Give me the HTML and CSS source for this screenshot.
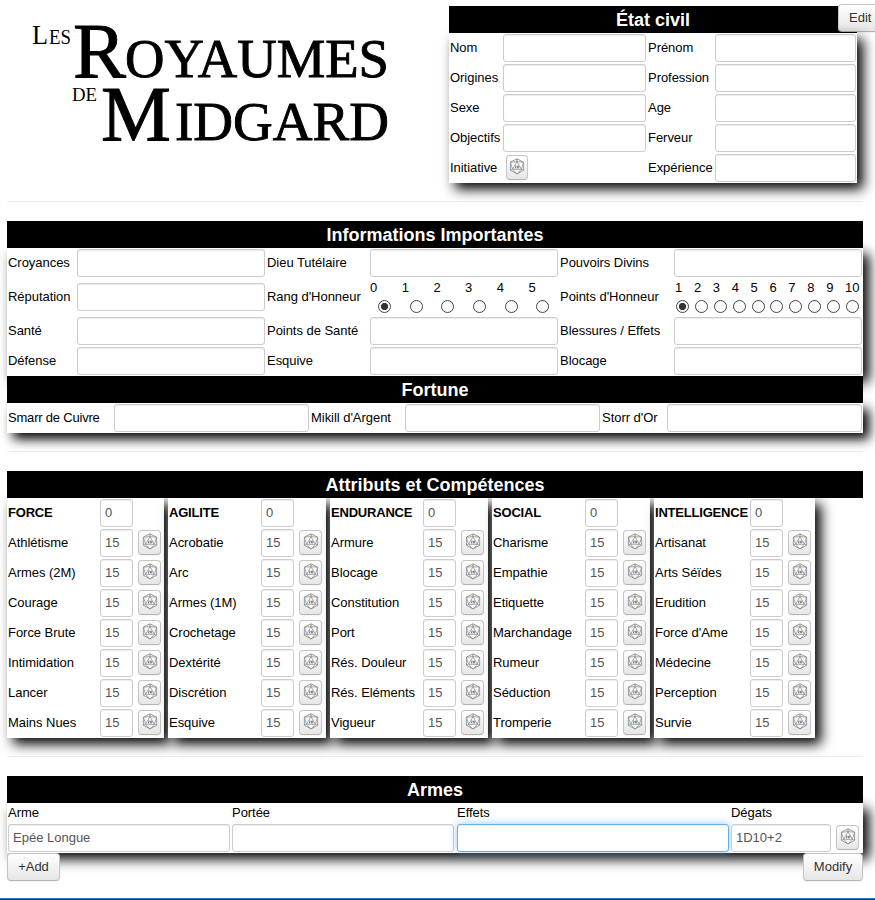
FILE: index.html
```html
<!DOCTYPE html>
<html lang="fr">
<head>
<meta charset="utf-8">
<title>Les Royaumes de Midgard</title>
<link rel="stylesheet" href="styles.css">
</head>
<body>
<svg class="defs" aria-hidden="true">
  <symbol id="d20" viewBox="0 0 16 17">
    <path d="M8 .8 14.6 4.2V12.2L8 16 1.4 12.2V4.2Z" fill="#f8f8f8" stroke="#8e8e8e" stroke-width=".9"/>
    <path d="M8 3.6 12.4 11.3H3.6ZM8 1V3.6M1.4 4.2 8 3.6 14.6 4.2M1.4 4.2 3.6 11.3 1.4 12.2M14.6 4.2 12.4 11.3 14.6 12.2M3.6 11.3 8 16 12.4 11.3" fill="none" stroke="#8c8c8c" stroke-width=".75"/>
    <path d="M6 8H7.4L6.2 10H7.5M8.5 8H9.8V10H8.5Z" fill="none" stroke="#666" stroke-width=".7"/>
    <path d="M8 1.3V3.5" stroke="#c9a05c" stroke-width=".9"/><path d="M1.6 5.5V11" stroke="#8fb5dc" stroke-width=".6"/><path d="M14.4 5.5V11" stroke="#a5b4d8" stroke-width=".6"/>
  </symbol>
</svg>
<main class="sheet">
  <header class="top">
    <svg class="logo" width="400" height="160" viewBox="0 0 400 160">
      <text x="25" y="38" font-size="27" textLength="16" lengthAdjust="spacingAndGlyphs">L</text>
      <text x="42" y="38" font-size="20" textLength="22" lengthAdjust="spacingAndGlyphs">ES</text>
      <g class="heavy">
      <text x="66" y="70.5" font-size="78" textLength="53" lengthAdjust="spacingAndGlyphs">R</text>
      <text x="118" y="70.5" font-size="55" textLength="264" lengthAdjust="spacingAndGlyphs">OYAUMES</text>
      <text x="94" y="134" font-size="78" textLength="70" lengthAdjust="spacingAndGlyphs">M</text>
      <text x="168" y="134" font-size="55" textLength="214" lengthAdjust="spacingAndGlyphs">IDGARD</text>
      </g>
      <text x="65" y="95" font-size="19" textLength="25" lengthAdjust="spacingAndGlyphs">DE</text>
    </svg>
    <section class="civil">
      <h2>État civil</h2>
      <button class="btn edit">Edit</button>
      <div class="panel civil-grid">
        <label>Nom</label><input><label>Prénom</label><input>
        <label>Origines</label><input><label>Profession</label><input>
        <label>Sexe</label><input><label>Age</label><input>
        <label>Objectifs</label><input><label>Ferveur</label><input>
        <label>Initiative</label><button class="roll"><svg><use href="#d20"/></svg></button><label>Expérience</label><input>
      </div>
    </section>
  </header>
  <hr>
  <section class="infos">
    <h2>Informations Importantes</h2>
    <div class="panel info-grid">
      <label>Croyances</label><input><label>Dieu Tutélaire</label><input><label>Pouvoirs Divins</label><input>
      <label>Réputation</label><input><label>Rang d'Honneur</label>
      <div class="scale rank">
        <label>0<input type="radio" name="rang" checked></label><label>1<input type="radio" name="rang"></label><label>2<input type="radio" name="rang"></label><label>3<input type="radio" name="rang"></label><label>4<input type="radio" name="rang"></label><label>5<input type="radio" name="rang"></label>
      </div>
      <label>Points d'Honneur</label>
      <div class="scale points">
        <label>1<input type="radio" name="pts" checked></label><label>2<input type="radio" name="pts"></label><label>3<input type="radio" name="pts"></label><label>4<input type="radio" name="pts"></label><label>5<input type="radio" name="pts"></label><label>6<input type="radio" name="pts"></label><label>7<input type="radio" name="pts"></label><label>8<input type="radio" name="pts"></label><label>9<input type="radio" name="pts"></label><label>10<input type="radio" name="pts"></label>
      </div>
      <label>Santé</label><input><label>Points de Santé</label><input><label>Blessures / Effets</label><input>
      <label>Défense</label><input><label>Esquive</label><input><label>Blocage</label><input>
    </div>
    <h2>Fortune</h2>
    <div class="panel fortune-grid">
      <label>Smarr de Cuivre</label><input><label>Mikill d'Argent</label><input><label>Storr d'Or</label><input>
    </div>
  </section>
  <hr>
  <section>
    <h2>Attributs et Compétences</h2>
    <div class="attributes">
      <div class="panel attr first">
        <b>FORCE</b><input value="0"><i></i>
        <label>Athlétisme</label><input value="15"><button class="roll"><svg><use href="#d20"/></svg></button>
        <label>Armes (2M)</label><input value="15"><button class="roll"><svg><use href="#d20"/></svg></button>
        <label>Courage</label><input value="15"><button class="roll"><svg><use href="#d20"/></svg></button>
        <label>Force Brute</label><input value="15"><button class="roll"><svg><use href="#d20"/></svg></button>
        <label>Intimidation</label><input value="15"><button class="roll"><svg><use href="#d20"/></svg></button>
        <label>Lancer</label><input value="15"><button class="roll"><svg><use href="#d20"/></svg></button>
        <label>Mains Nues</label><input value="15"><button class="roll"><svg><use href="#d20"/></svg></button>
      </div>
      <div class="panel attr">
        <b>AGILITE</b><input value="0"><i></i>
        <label>Acrobatie</label><input value="15"><button class="roll"><svg><use href="#d20"/></svg></button>
        <label>Arc</label><input value="15"><button class="roll"><svg><use href="#d20"/></svg></button>
        <label>Armes (1M)</label><input value="15"><button class="roll"><svg><use href="#d20"/></svg></button>
        <label>Crochetage</label><input value="15"><button class="roll"><svg><use href="#d20"/></svg></button>
        <label>Dextérité</label><input value="15"><button class="roll"><svg><use href="#d20"/></svg></button>
        <label>Discrétion</label><input value="15"><button class="roll"><svg><use href="#d20"/></svg></button>
        <label>Esquive</label><input value="15"><button class="roll"><svg><use href="#d20"/></svg></button>
      </div>
      <div class="panel attr">
        <b>ENDURANCE</b><input value="0"><i></i>
        <label>Armure</label><input value="15"><button class="roll"><svg><use href="#d20"/></svg></button>
        <label>Blocage</label><input value="15"><button class="roll"><svg><use href="#d20"/></svg></button>
        <label>Constitution</label><input value="15"><button class="roll"><svg><use href="#d20"/></svg></button>
        <label>Port</label><input value="15"><button class="roll"><svg><use href="#d20"/></svg></button>
        <label>Rés. Douleur</label><input value="15"><button class="roll"><svg><use href="#d20"/></svg></button>
        <label>Rés. Eléments</label><input value="15"><button class="roll"><svg><use href="#d20"/></svg></button>
        <label>Vigueur</label><input value="15"><button class="roll"><svg><use href="#d20"/></svg></button>
      </div>
      <div class="panel attr">
        <b>SOCIAL</b><input value="0"><i></i>
        <label>Charisme</label><input value="15"><button class="roll"><svg><use href="#d20"/></svg></button>
        <label>Empathie</label><input value="15"><button class="roll"><svg><use href="#d20"/></svg></button>
        <label>Etiquette</label><input value="15"><button class="roll"><svg><use href="#d20"/></svg></button>
        <label>Marchandage</label><input value="15"><button class="roll"><svg><use href="#d20"/></svg></button>
        <label>Rumeur</label><input value="15"><button class="roll"><svg><use href="#d20"/></svg></button>
        <label>Séduction</label><input value="15"><button class="roll"><svg><use href="#d20"/></svg></button>
        <label>Tromperie</label><input value="15"><button class="roll"><svg><use href="#d20"/></svg></button>
      </div>
      <div class="panel attr last">
        <b>INTELLIGENCE</b><input value="0"><i></i>
        <label>Artisanat</label><input value="15"><button class="roll"><svg><use href="#d20"/></svg></button>
        <label>Arts Séïdes</label><input value="15"><button class="roll"><svg><use href="#d20"/></svg></button>
        <label>Erudition</label><input value="15"><button class="roll"><svg><use href="#d20"/></svg></button>
        <label>Force d'Ame</label><input value="15"><button class="roll"><svg><use href="#d20"/></svg></button>
        <label>Médecine</label><input value="15"><button class="roll"><svg><use href="#d20"/></svg></button>
        <label>Perception</label><input value="15"><button class="roll"><svg><use href="#d20"/></svg></button>
        <label>Survie</label><input value="15"><button class="roll"><svg><use href="#d20"/></svg></button>
      </div>
    </div>
  </section>
  <hr>
  <section>
    <h2>Armes</h2>
    <div class="panel weapons">
      <label>Arme</label><label>Portée</label><label>Effets</label><label>Dégats</label><i></i>
      <input value="Epée Longue"><input><input class="active"><input value="1D10+2"><button class="roll"><svg><use href="#d20"/></svg></button>
    </div>
    <div class="actions"><button class="btn">+Add</button><button class="btn modify">Modify</button></div>
  </section>
</main>
<footer class="taskbar"></footer>
</body>
</html>
```
FILE: styles.css
```css
* { box-sizing: border-box; }
html, body { margin: 0; height: 900px; overflow: hidden; }
body {
  display: flex;
  flex-direction: column;
  background: #fff;
  color: #000;
  font: 13px/20px "Liberation Sans", Arial, sans-serif;
}
.defs { position: absolute; width: 0; height: 0; }
.sheet { width: 856px; margin-left: 7px; flex: 1; min-height: 0; padding-top: 6px; }
.top { display: flex; justify-content: space-between; height: 195px; }
.logo { display: block; font-family: "Liberation Serif", serif; }
.heavy { stroke: #000; stroke-width: .9px; }
hr { height: 1px; margin: 0 0 19px; border: 0; background: #eee; }
h2 {
  position: relative;
  margin: 0;
  height: 27px;
  padding-top: 1px;
  background: #000;
  color: #fff;
  font-size: 18px;
  line-height: 26px;
  text-align: center;
}
.panel {
  position: relative;
  display: grid;
  background: #fff;
  box-shadow: 6px 6px 12px #000;
}
.panel label, .panel b { padding-left: 1px; white-space: nowrap; align-self: center; letter-spacing: -.04px; }
.panel b { letter-spacing: -.2px; }

input:not([type="radio"]) {
  width: 100%;
  min-width: 0;
  height: 28px;
  margin: 1px 0;
  padding: 3px 4px 5px;
  border: 1px solid #ccc;
  border-radius: 3px;
  background: #fff;
  box-shadow: inset 0 1px 1px rgba(0, 0, 0, .075);
  color: #555;
  font: inherit;
  line-height: 18px;
  outline: 0;
}
.active:not([type="radio"]) {
  border-color: #66afe9;
  box-shadow: inset 0 1px 1px rgba(0, 0, 0, .075), 0 0 8px rgba(82, 168, 236, .6);
}

.btn, .roll {
  border: 1px solid #c5c5c5;
  border-bottom-color: #b3b3b3;
  border-radius: 4px;
  background: linear-gradient(#fff, #e6e6e6);
  box-shadow: inset 0 1px 0 rgba(255, 255, 255, .2), 0 1px 2px rgba(0, 0, 0, .05);
  color: #333;
  font: inherit;
}
.btn { height: 28px; padding: 0 10px; }
.roll { width: 23px; height: 25px; margin: 2px 0 0; padding: 0; display: flex; justify-content: center; }
.roll svg { display: block; width: 16px; height: 17px; margin-top: 2px; flex: none; }

.civil { position: relative; width: 408px; margin-right: 6px; }
.civil-grid { grid-template-columns: 54px 144px 68px 142px; grid-auto-rows: 30px; }
.civil-grid input:nth-child(4n+2) { width: 143px; }
.civil-grid input:nth-child(4n) { width: 141px; }
.civil-grid .roll { margin-left: 3px; width: 22px; }
.edit { position: absolute; left: 389px; top: -2px; width: 48px; text-align: left; }

.info-grid { grid-template-columns: 70px 189px 104px 189px 115px 189px; grid-template-rows: 30px 38px 30px 30px; }
.info-grid > input { width: 188px !important; align-self: center; }
.scale { display: grid; }
.scale label { position: relative; display: flex; flex-direction: column; line-height: 16px; align-self: start; top: 2px; padding-left: 0; }
.scale input { width: 13px; height: 13px; margin: 4px 0 0; appearance: none; border: 1px solid #444; border-radius: 50%; background: #fff; }
.scale input:checked { background: radial-gradient(circle, #333 3.2px, #fff 4px); }
.rank { grid-template-columns: repeat(6, 31.7px); }
.rank input { margin-left: 8px; }
.points { grid-template-columns: repeat(10, 18.9px); }
.points label { padding-left: 1px; }
.points input { margin-left: 1px; }

.fortune-grid { grid-template-columns: 107px 196px 95px 196px 66px 196px; height: 30px; }
.fortune-grid label:first-child { letter-spacing: -.2px; }
.fortune-grid input:not([type="radio"]) { width: 195px; }
.infos { height: 230px; }

.attributes { display: flex; gap: 4px; height: 258px; align-items: flex-start; }
.attr { width: 158px; grid-template-columns: 93px 38px 1fr; grid-auto-rows: 30px; }
.attr.first { width: 157px; }
.attr.last { width: 161px; grid-template-columns: 96px 38px 1fr; }
.attr input:not([type="radio"]) { width: 33px; }

.weapons { grid-template-columns: 224px 225px 274px 105px 1fr; grid-template-rows: 20px 30px; padding-left: 1px; }
.weapons label { padding-left: 0; }
.weapons input:not([type="radio"]) { width: 222px; }
.weapons input.active:not([type="radio"]) { width: 272px; margin-left: 0; }
.weapons input:nth-last-child(2):not([type="radio"]) { width: 100px; }
.actions { position: relative; display: flex; justify-content: space-between; }
.actions .btn { width: 53px; }
.actions .modify { width: 60px; padding: 0; }
.taskbar { flex: none; height: 2px; background: #30343a; border-top: 1px solid #187bd0; position: relative; }
```
